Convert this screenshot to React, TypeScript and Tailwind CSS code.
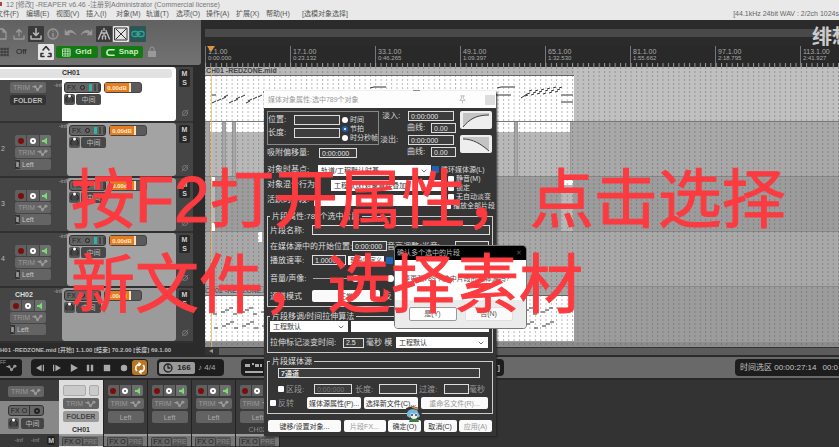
import React from "react";

const icon = {
  fill: "none",
  stroke: "currentColor",
  strokeLinecap: "round" as const,
  strokeLinejoin: "round" as const,
};

function EnvelopeIcon() {
  return (
    <svg viewBox="0 0 12 8" className="h-2 w-[11px] shrink-0" {...icon} strokeWidth="1.4">
      <path d="M1 2.5h2.500L6 6l3.500-4H11" />
      <circle cx="3.500" cy="2.500" r=".7" fill="currentColor" />
      <circle cx="6" cy="6" r=".9" fill="currentColor" />
      <circle cx="9.500" cy="2" r=".9" fill="currentColor" />
    </svg>
  );
}

function TrimButton() {
  return (
    <button className="flex h-[11px] w-9 shrink-0 items-center justify-center gap-[2px] rounded-[2px] bg-[#646464] text-[7px] leading-none text-[#9a9a9a]">
      TRIM
      <EnvelopeIcon />
    </button>
  );
}

function RecordButtons() {
  return (
    <div className="flex h-[11px] w-9 shrink-0 items-center gap-px">
      <button aria-label="录音" className="flex h-full flex-1 items-center justify-center rounded-l-[2px] bg-[#606060]">
        <span className="size-[6px] rounded-full bg-[#7c0d0d]" />
      </button>
      <button aria-label="输入" className="flex h-full flex-1 items-center justify-center bg-[#606060]">
        <span className="size-[6px] rounded-full border-2 border-white bg-[#555]" />
      </button>
      <button aria-label="监听" className="flex h-full flex-1 items-center justify-center rounded-r-[2px] bg-[#6e6e6e]">
        <svg viewBox="0 0 8 8" className="size-2" fill="#77e070">
          <path d="M1 3h2l3-2.500v7L3 5H1z" />
        </svg>
      </button>
    </div>
  );
}

function Knob() {
  return (
    <button aria-label="声像" className="flex size-[11px] shrink-0 items-center justify-center rounded-[2px] bg-[#555]">
      <svg viewBox="0 0 11 11" className="size-[11px]">
        <path d="M3 8.500a3.800 3.800 0 1 1 5 0" fill="#444" stroke="#222" />
        <circle cx="5.500" cy="2" r="1.500" fill="#fff" />
      </svg>
    </button>
  );
}

function MuteSolo() {
  return (
    <div className="flex w-[17px] shrink-0 flex-col items-center justify-between bg-[#454545] pb-1 pt-[2px] text-[#888]">
      <div className="flex w-[11px] flex-col rounded-[2px] bg-[#282828] text-[7px] font-bold leading-[9px] text-[#cfcfcf]">
        <button aria-label="静音">M</button>
        <button aria-label="独奏">S</button>
      </div>
      <svg viewBox="0 0 8 8" className="size-2" {...icon} strokeWidth=".7">
        <circle cx="4" cy="4" r="2.500" />
        <path d="M1 7l6-6" />
      </svg>
    </div>
  );
}

function TrackControls() {
  return (
    <div className="flex flex-col gap-px pl-[2px] pt-[2px]">
      <div className="flex gap-[3px]">
        <div className="flex h-[11px] w-[37px] items-center gap-[2px] rounded-[3px] border border-[#333] bg-[#646464] pl-[2px] text-[7px] leading-none text-[#252525]">
          <button>FX</button>
          <button aria-label="启用效果" className="ml-[2px] size-[5px] rounded-full border border-[#252525]" />
          <span className="ml-[2px] h-[7px] w-1 bg-[#2fb3a5]" />
          <span className="h-[7px] w-[2px] bg-[#444]" />
          <span className="h-[7px] w-[2px] bg-[#444]" />
        </div>
        <div className="flex h-[11px] w-[38px] items-center rounded-[3px] border border-[#444] bg-[#5a5a5a]">
          <button className="h-full w-[26px] border-r-2 border-[#ffe0b8] bg-[#e57d20] text-[6px] font-bold leading-none text-[#ffe9d2]">
            0.00dB
          </button>
        </div>
      </div>
      <div className="flex gap-px">
        <Knob />
        <button className="h-[11px] w-[25px] rounded-[2px] bg-[#484848] text-[7px] leading-none text-[#bbb]">中间</button>
      </div>
    </div>
  );
}

function FolderTrack() {
  return (
    <section className="flex h-14 border-b-2 border-[#333] bg-[#454545]">
      <div className="flex flex-1 flex-col rounded-r-[3px] bg-white">
        <div className="my-[2px] mr-1 flex h-[9px] items-center rounded-r-[3px] bg-[#e2e2e2] pl-[62px] text-[7px] font-bold text-[#333]">
          CH01
        </div>
        <div className="flex flex-1">
          <div className="flex w-[62px] flex-col gap-[2px] bg-[#484848] pl-[10px] pt-[2px]">
            <div className="flex">
              <TrimButton />
              <span className="ml-auto text-[6px] leading-none text-[#aaa]">-inf</span>
            </div>
            <button className="h-[10px] w-9 rounded-[2px] bg-[#333] text-[7px] font-bold leading-none text-[#bbb]">FOLDER</button>
          </div>
          <TrackControls />
        </div>
      </div>
      <MuteSolo />
    </section>
  );
}

function LeftInput() {
  return (
    <button className="flex h-[11px] w-9 items-center gap-[2px] rounded-[2px] bg-[#646464] text-[7px] leading-none text-[#c6c6c6]">
      <svg viewBox="0 0 5 9" className="h-[9px] w-[5px] bg-[#333]" {...icon} strokeWidth=".7">
        <path d="M1 2l3 1-3 1 3 1-3 1 3 1" />
      </svg>
      Left
    </button>
  );
}

function ChildTrack({ number }: { number: string }) {
  return (
    <section className="flex h-[55px] border-b-2 border-[#303030] bg-[#454545]">
      <div className="flex w-[15px] flex-col items-start justify-center pl-px text-[7px] text-[#bbb]">{number}</div>
      <div className="flex w-9 flex-col gap-px pt-3">
        <RecordButtons />
        <TrimButton />
        <LeftInput />
      </div>
      <span className="w-4 text-right text-[6px] leading-[7px] text-[#aaa]">-inf</span>
      <div className={`flex-1 rounded-[3px] ${number === "3" ? "bg-[#9b9b9b]" : "bg-[#a3a3a3]"}`}>
        <TrackControls />
      </div>
      <MuteSolo />
    </section>
  );
}

function SecondFolderTrack() {
  return (
    <section className="flex h-[55px] border-b-2 border-[#303030] bg-[#454545]">
      <div className="flex w-[46px] flex-col gap-px pl-[10px]">
        <span className="h-[11px] pl-[5px] pt-[2px] text-[7px] font-bold leading-[9px] text-[#ddd]">CH02</span>
        <RecordButtons />
        <TrimButton />
        <LeftInput />
      </div>
      <span className="w-4 text-right text-[6px] leading-[7px] text-[#aaa]">-inf</span>
      <div className="flex-1 rounded-[3px] bg-[#9b9b9b]">
        <TrackControls />
      </div>
      <MuteSolo />
    </section>
  );
}

function ToolButton({ label, tone = "plain", children }: { label: string; tone?: "plain" | "dark" | "light" | "teal"; children: React.ReactNode }) {
  const tones = {
    plain: "text-[#999]",
    dark: "bg-[#3a3a3a] text-[#bbb]",
    light: "bg-[#e4e4e4] text-[#333]",
    teal: "bg-[#2c5553] text-[#2aa79b]",
  };
  return (
    <button aria-label={label} className={`flex h-4 w-4 shrink-0 items-center justify-center rounded-[1px] ${tones[tone]}`}>
      <svg viewBox="0 0 14 14" className="size-[14px]" {...icon} strokeWidth="1.3">
        {children}
      </svg>
    </button>
  );
}

function Toolbar() {
  return (
    <div className="flex h-[45px] flex-col gap-[2px] rounded-br-[3px] bg-linear-to-b from-[#616161] to-[#727272] pt-[6px]">
      <div className="-ml-[6px] flex gap-px">
        <ToolButton label="新建工程"><path d="M3 2h5l3 3v7H3zM8 2v3h3" /></ToolButton>
        <ToolButton label="打开工程"><path d="M2 9v3h10V9M7 9V3M4.500 5L7 2.500 9.500 5" /></ToolButton>
        <ToolButton label="保存工程" tone="dark"><path d="M2 9v3h10V9M7 1.500v6.500M4.500 6L7 8.500 9.500 6" strokeWidth="1.500" /></ToolButton>
        <ToolButton label="工程设置"><circle cx="7" cy="7" r="5" /><path d="M7 6.500v3.500M7 4v.2" /></ToolButton>
        <ToolButton label="撤销"><path d="M2 3v5h5L5.500 6.500C8 4.500 11 5.500 13 8c-2-5-7-6-9.500-3z" fill="currentColor" strokeWidth=".5" /></ToolButton>
        <ToolButton label="重做"><path d="M12 3v5H7l1.500-1.500C6 4.500 3 5.500 1 8c2-5 7-6 9.500-3z" fill="currentColor" strokeWidth=".5" /></ToolButton>
        <ToolButton label="节拍器" tone="dark"><path d="M5 3.500L1.500 12M9 3.500l3.500 8.500M7 1.500v2M4.500 6h5M7 6v3M5.500 9v3M8.500 9v3" strokeWidth="1.400" /></ToolButton>
        <ToolButton label="自动交叉淡变" tone="light"><path d="M1 1h12v12H1zM2 2l10 10M12 2L2 12" strokeWidth="1" /></ToolButton>
        <ToolButton label="编组" tone="teal"><rect x="1" y="4.500" width="6" height="5" rx="2" /><rect x="7" y="4.500" width="6" height="5" rx="2" /><path d="M5 7h4" /></ToolButton>
      </div>
      <div className="flex items-center">
        <svg viewBox="0 0 10 10" className="size-[10px] text-[#333]" {...icon} strokeWidth="1"><path d="M0 2h8M0 5h8M0 8h8M2 1v8M5 1v8M8 1v8" strokeDasharray="2 1" /></svg>
        <span className="ml-[6px] w-[22px] text-[8px] leading-none text-[#222]">Off</span>
        <ToolButton label="波纹编辑" tone="light"><path d="M4 5l3-3.500L10 5M4 8.500H2v3h3M10 8.500h2v3H9" strokeWidth="1.600" /></ToolButton>
        <button className="ml-[2px] flex h-3 w-[42px] items-center justify-center gap-1 rounded-[2px] bg-[#137911] text-[8px] font-bold leading-none text-[#c6edc4]">
          <svg viewBox="0 0 10 10" className="size-[9px]" {...icon} strokeWidth=".9"><path d="M1 1h8v8H1zM3.500 1v8M6.500 1v8M1 3.500h8M1 6.500h8" /></svg>
          Grid
        </button>
        <button className="ml-[3px] flex h-3 w-[42px] items-center justify-center gap-1 rounded-[2px] bg-[#137911] text-[8px] font-bold leading-none text-[#c6edc4]">
          <svg viewBox="0 0 10 10" className="size-[9px]" {...icon} strokeWidth="1.800"><path d="M9 2H4a3 3 0 0 0 0 6h5" /></svg>
          Snap
        </button>
        <button aria-label="锁定" className="ml-1 text-[#999]">
          <svg viewBox="0 0 10 12" className="h-3 w-[10px]" fill="currentColor"><path d="M1 5h8v6H1z" /><path d="M3 5V3a2 2 0 0 1 4 0v2" fill="none" stroke="currentColor" /></svg>
        </button>
      </div>
    </div>
  );
}

const rulerMarks = [
  ["1.1.00", "0:00.000"],
  ["17.1.00", "0:23.132"],
  ["33.1.00", "0:46.265"],
  ["49.1.00", "1:09.397"],
  ["65.1.00", "1:32.530"],
  ["81.1.00", "1:55.662"],
  ["97.1.00", "2:18.795"],
  ["113.1.00", "2:41.927"],
];

function Ruler() {
  return (
    <div className="relative flex h-[21px] overflow-hidden bg-[#292929]">
      {rulerMarks.map(([bar, time]) => (
        <div key={bar} className="flex w-[85px] shrink-0 flex-col border-l border-[#777] pl-[2px] pt-[2px] text-[7px] leading-[7px] text-[#aaa]">
          <span>{bar}</span>
          <span className="text-[6px]">{time}</span>
        </div>
      ))}
      <svg className="absolute inset-0 h-full w-full">
        <defs>
          <pattern id="ticks" width="5.320" height="21" patternUnits="userSpaceOnUse">
            <path d="M.5 17v4" stroke="#999" />
          </pattern>
        </defs>
        <rect width="100%" height="100%" fill="url(#ticks)" />
        <path d="M2 0h8l-4 6z" fill="#dc9440" />
      </svg>
    </div>
  );
}

const melody = Array.from({ length: 12 }, (_, i) => {
  const x = 7 + i * 4 + (i % 3);
  const y = 27 - (i % 4) * 2;
  return `M${x} ${y}l4 -2`;
}).join("");
const climb = Array.from({ length: 18 }, (_, i) => `M${320 + i * 2} ${20 - Math.round(i / 4) - (i % 3) * 2}l3 -1`).join("");
const pulses = Array.from({ length: 68 }, (_, i) => {
  const x = 8 + i * 5 + ((i * 7) % 4);
  const y = 18 - ((i * 5) % 4) * 2;
  return `M${x} ${y}h4M${x + 1} ${y + 14}h4`;
}).join("");

function Arrangement() {
  return (
    <div className="relative flex h-[280px] flex-col overflow-hidden bg-[#8c8c8c]">
      <div className="h-[54px] bg-[#c0c0c0]">
        <div className="flex h-full w-[369px] flex-col">
          <span className="h-[9px] border-b border-[#666] bg-[#b9b9b9] pl-px text-[7px] font-bold leading-[8px] text-[#444]">CH01 -REDZONE.mid</span>
          <svg className="min-h-0 w-full flex-1 bg-white" fill="none" stroke="#333">
            <path d={melody} />
            <path d="M6 19h5M58 16h9M165 12l4-1h12M208 15h7M292 12l4-1h14M290 19h16M316 22l6-4M356 19h12M356 26h12" />
            <path d={climb} />
          </svg>
        </div>
      </div>
      <div className="h-[55px] border-t border-[#777] bg-[#a8a8a8]">
        <div className="flex h-full w-[369px] gap-[2px] pl-1">
          {["w-[14px]", "w-2", "w-[280px]", "w-[54px]"].map((w, i) => (
            <div key={i} className={`${w} shrink-0 border-x border-[#999] bg-[#b8b8b8]`}>
              <div className="h-[10px] bg-white" />
            </div>
          ))}
        </div>
      </div>
      <div className="flex h-[55px] border-t border-[#888] bg-[#9c9c9c]">
        <span className="ml-[6px] h-[54px] w-1 border-y-8 border-white bg-[#b8b8b8]" />
        <span className="ml-[346px] h-[54px] w-3 border-t-8 border-white bg-[#b8b8b8]" />
      </div>
      <div className="h-[55px] border-t border-[#888] bg-[#a8a8a8]">
        <div className="ml-[53px] h-[10px] w-1 bg-white" />
      </div>
      <div className="h-[56px] border-t border-[#888] bg-[#9c9c9c]">
        <div className="flex h-[54px] w-[369px] flex-col">
          <span className="h-[9px] border-b border-[#666] bg-[#a5a5a5] text-[7px] leading-[8px] text-[#444]">CH02 -REDZONE.mid</span>
          <svg className="min-h-0 w-full flex-1 bg-white" fill="none" stroke="#333">
            <path d={pulses} />
          </svg>
        </div>
      </div>
      <svg className="pointer-events-none absolute inset-0 h-full w-full">
        <defs>
          <pattern id="grid" width="5.320" height="4" patternUnits="userSpaceOnUse">
            <path d="M.5 0v2" stroke="#555" strokeOpacity=".42" />
          </pattern>
        </defs>
        <rect width="100%" height="100%" fill="url(#grid)" />
        <path d="M6.500 0v280" stroke="#eeb463" strokeOpacity=".75" />
      </svg>
    </div>
  );
}

function PlayIcon({ label, children }: { label: string; children: React.ReactNode }) {
  return (
    <button aria-label={label} className="flex h-full flex-1 items-center justify-center text-[#aaa]">
      <svg viewBox="0 0 10 10" className="size-2" fill="currentColor">{children}</svg>
    </button>
  );
}

function Transport() {
  return (
    <div className="flex h-[23px] items-center border-b-2 border-[#282828] bg-[#696969]">
      <button className="flex h-[17px] w-[22px] items-center overflow-hidden rounded-r-[3px] bg-[#1d1d1d] text-[5px] leading-none text-[#999]">
        <span className="self-start pt-px">FF</span>
        <EnvelopeIcon />
      </button>
      <div className="ml-[9px] flex h-[17px] w-[117px] items-center rounded-[4px] bg-[#1d1d1d] px-px">
        <PlayIcon label="转到开头"><path d="M7 1v8L0 5zM8.500 1H10v8H8.500z" /></PlayIcon>
        <PlayIcon label="转到结尾"><path d="M3 1v8l7-4zM0 1h1.500v8H0z" /></PlayIcon>
        <PlayIcon label="播放"><path d="M1 0v10l9-5z" /></PlayIcon>
        <PlayIcon label="暂停"><path d="M1 1h3v8H1zM6 1h3v8H6z" /></PlayIcon>
        <PlayIcon label="停止"><path d="M1 1h8v8H1z" /></PlayIcon>
        <PlayIcon label="录制"><circle cx="5" cy="5" r="4" /></PlayIcon>
        <button aria-label="循环" className="flex h-[15px] w-[15px] shrink-0 items-center justify-center rounded-[3px] bg-[#b97522] text-white">
          <svg viewBox="0 0 12 12" className="size-3" {...icon} strokeWidth="1.600"><path d="M2.500 8.500A4 4 0 0 1 5 2.200h1M9.500 3.500A4 4 0 0 1 7 9.800H6M5 1l1.500 1.200L5 3.500M7 8.500L5.500 9.800 7 11" /></svg>
        </button>
      </div>
      <div className="ml-[9px] flex h-[17px] w-[67px] items-center gap-[3px] rounded-[4px] bg-[#1d1d1d] px-[2px] text-[8px] text-[#aaa]">
        <button className="flex h-3 w-9 items-center justify-center gap-1 rounded-[2px] bg-[#999] text-[8px] font-bold leading-none text-[#222]">
          <svg viewBox="0 0 10 10" className="size-[10px]" {...icon} strokeWidth="1.300"><circle cx="5" cy="5" r="4" /><path d="M5 2.500V5h2" /></svg>
          166
        </button>
        <span className="whitespace-nowrap">♪ 4/4</span>
      </div>
      <div className="ml-[17px] flex h-[17px] w-[263px] items-center justify-between rounded-[4px] bg-[#1d1d1d] px-1 text-[8px] font-bold text-[#bbb]">
        <svg viewBox="0 0 18 12" className="h-3 w-[18px]" fill="#aaa">
          <path d="M0 2h5v3H0zM7 1h2v2H7zM10 2h4v3h-4zM15 2h2v3h-2zM0 9h18v2H0z" />
        </svg>
        <span>]</span>
      </div>
      <div className="ml-auto flex h-[17px] w-[104px] items-center gap-[6px] overflow-hidden whitespace-nowrap rounded-l-[4px] bg-[#1d1d1d] pl-[5px] text-[8px] text-[#c4c4c4]">
        <span>时间选区 00:00:27:14</span>
        <span>00:0</span>
      </div>
    </div>
  );
}

function FxPre() {
  return (
    <div className="flex h-3 border-t-2 border-[#9a9a9a] bg-[#777] px-[3px] pt-px text-[7px] leading-[8px] text-[#252525]">
      <button className="w-[21px] rounded-t-[2px] border border-b-0 border-[#444] bg-[#666]">FX O</button>
      <button className="w-[15px] rounded-t-[2px] bg-[#555] text-[#888]">PRE</button>
    </div>
  );
}

function MixerStrip({ name }: { name: string }) {
  return (
    <section className="flex w-11 shrink-0 flex-col border-r border-[#222] bg-[#3b3b3b]">
      <div className="flex h-[54px] flex-col items-center gap-[2px] pt-[5px]">
        <RecordButtons />
        <TrimButton />
        <button className="h-3 w-9 rounded-[2px] bg-[#626262] text-[7px] leading-none text-[#aaa]">Left</button>
        <span className="text-[7px] leading-[9px] text-[#888]">{name}</span>
      </div>
      <FxPre />
    </section>
  );
}

function Mixer() {
  return (
    <div className="flex min-h-[66px] flex-1 overflow-hidden bg-[#333]">
      <section className="flex w-[59px] shrink-0 flex-col bg-[#3b3b3b]">
        <div className="h-[21px] pl-2 pt-[6px]"><TrimButton /></div>
        <div className="flex h-[33px] flex-col gap-[2px] bg-[#888] pl-2 pt-1">
          <div className="flex h-[11px] w-9 rounded-[3px] border border-[#333] bg-[#666] text-[7px] leading-[9px] text-[#222]">
            <button className="w-[21px] border-r border-[#333]">FX O</button>
            <button aria-label="启用效果" className="flex flex-1 items-center justify-center"><span className="size-[6px] rounded-full border-2 border-[#222]" /></button>
          </div>
          <div className="flex gap-[2px]">
            <Knob />
            <button className="h-[11px] w-[23px] rounded-[2px] bg-[#444] text-[7px] leading-none text-[#bbb]">中间</button>
          </div>
        </div>
        <div className="flex flex-1 items-center justify-end gap-2 bg-[#383838] pr-1 text-[6px] text-[#999]">
          <span>-inf</span><span>-inf</span><button className="rounded-[2px] bg-[#222] px-px text-[7px] font-bold leading-[9px] text-[#ccc]">M</button>
        </div>
      </section>
      <section className="flex w-[45px] shrink-0 flex-col border-r border-[#222] bg-[#dedede]">
        <div className="flex h-[54px] flex-col items-center gap-[2px] pt-[5px]">
          <div className="flex h-[11px] w-9 gap-[3px]">
            <span className="w-[23px] rounded-[2px] border border-[#aaa] bg-[#cacaca]" />
            <span className="flex-1 rounded-[2px] border border-[#aaa] bg-[#cacaca]" />
          </div>
          <TrimButton />
          <button className="h-[11px] w-9 rounded-[2px] bg-[#999] text-[7px] font-bold leading-none text-[#444]">FOLDER</button>
          <span className="pt-px text-[7px] font-bold leading-[9px] text-[#333]">CH01</span>
        </div>
        <FxPre />
      </section>
      <MixerStrip name="" />
      <MixerStrip name="" />
      <MixerStrip name="" />
      <MixerStrip name="CH02" />
    </div>
  );
}

function Field({ label, value = "", className }: { label: string; value?: string; className: string }) {
  return (
    <input
      aria-label={label}
      defaultValue={value}
      className={`h-[10px] min-w-0 shrink-0 border border-[#ddd] bg-[#3d3d3d] px-[2px] text-[7px] leading-none text-[#e4e4e4] ${className}`}
    />
  );
}

function Dropdown({ label, value, className }: { label: string; value: string; className: string }) {
  return (
    <span className={`relative flex h-[11px] shrink-0 ${className}`}>
      <select aria-label={label} className="h-full w-full appearance-none bg-white px-[3px] text-[7px] leading-none text-[#333]">
        <option>{value}</option>
      </select>
      <svg viewBox="0 0 6 4" className="pointer-events-none absolute right-1 top-1 h-1 w-[6px]" {...icon} stroke="#777"><path d="M1 1l2 2 2-2" /></svg>
    </span>
  );
}

function Check({ label, checked = false, className = "" }: { label: string; checked?: boolean; className?: string }) {
  return (
    <label className={`flex h-[9px] items-center gap-[2px] whitespace-nowrap ${className}`}>
      <input
        type="checkbox"
        defaultChecked={checked}
        className="size-[6px] shrink-0 appearance-none rounded-[1px] bg-white checked:size-[7px] checked:bg-[#1d62b4]"
      />
      {label}
    </label>
  );
}

function Radio({ label, checked = false }: { label: string; checked?: boolean }) {
  return (
    <label className="flex h-[9px] items-center gap-[2px] whitespace-nowrap">
      <input
        type="radio"
        name="time-unit"
        defaultChecked={checked}
        className="size-[6px] shrink-0 appearance-none rounded-full bg-white checked:border-2 checked:border-[#1d62b4]"
      />
      {label}
    </label>
  );
}

function CurveButton({ label, curve, area }: { label: string; curve: string; area: string }) {
  return (
    <button aria-label={label} className="h-[18px] w-8 rounded-[2px] bg-[#eee] p-px">
      <svg viewBox="0 0 30 16" className="h-4 w-[30px]">
        <path d={area} fill="#c4c4c4" />
        <path d={curve} fill="none" stroke="#444" />
      </svg>
    </button>
  );
}

function PushButton({ children, className, dim = false }: { children: string; className: string; dim?: boolean }) {
  return (
    <button className={`h-3 shrink-0 overflow-hidden whitespace-nowrap rounded-[2px] bg-[#fafafa] text-[7px] leading-none ${dim ? "text-[#999]" : "text-[#333]"} ${className}`}>
      {children}
    </button>
  );
}

function PropertiesDialog() {
  return (
    <section className="absolute left-[264px] top-[91px] flex w-[232px] flex-col bg-[#353535] pb-1 text-[8px] leading-[9px] text-[#ddd] shadow-[1px_1px_2px_#222]">
      <header className="flex h-[17px] items-center bg-[#fdfdfd] pl-1 text-[7px] text-[#999]">
        媒体对象属性:选中789个对象
        <svg viewBox="0 0 10 10" className="ml-auto mr-[18px] size-[9px]" {...icon} stroke="#bbb"><path d="M3 1h4M4 1v3L2 6h6L6 4V1M5 6v3" /></svg>
        <button aria-label="关闭" className="mr-px size-[10px] bg-[#ddd]" />
      </header>
      <div className="flex h-[53px] pl-[3px] pt-[3px]">
        <div className="flex w-[113px] flex-col">
          <div className="flex h-[34px] w-[112px] border border-[#888]">
            <div className="flex w-[73px] flex-col gap-[3px] pt-[3px]">
              <label className="flex justify-between">位置:<Field label="位置" className="w-[46px]" /></label>
              <label className="flex justify-between">长度:<Field label="长度" className="w-[46px]" /></label>
            </div>
            <div className="flex flex-col pl-[2px] pt-[3px] text-[7px]">
              <Radio label="时间" />
              <Radio label="节拍" checked />
              <Radio label="时分秒帧" />
            </div>
          </div>
          <label className="mt-[3px] flex whitespace-nowrap"><span className="w-[52px]">吸附偏移量:</span><Field label="吸附偏移量" value="0:00:000" className="w-[38px]" /></label>
        </div>
        <div className="flex w-[76px] flex-col gap-[2px]">
          <label className="flex justify-between pl-[2px]">淡入:<Field label="淡入" value="0:00:000" className="mr-[2px] w-[46px]" /></label>
          <label className="flex justify-between pl-[27px]">曲线:<Field label="淡入曲线" value="0.00" className="w-[25px]" /></label>
          <label className="flex justify-between">淡出:<Field label="淡出" value="0:00:000" className="mr-[2px] w-[46px]" /></label>
          <label className="flex justify-between pl-[27px]">曲线:<Field label="淡出曲线" value="0.00" className="w-[25px]" /></label>
        </div>
        <div className="ml-1 flex flex-col gap-[6px]">
          <CurveButton label="淡入曲线形状" curve="M2 15C8 8 14 3 28 3" area="M2 15C8 8 14 3 28 3V1H2z" />
          <CurveButton label="淡出曲线形状" curve="M2 3C12 3 20 8 28 15" area="M2 3C12 3 20 8 28 15V1H2z" />
        </div>
      </div>
      <div className="flex h-[51px] overflow-hidden pl-[3px] pt-1">
        <div className="flex w-[165px] shrink-0 flex-col gap-1 whitespace-nowrap">
          <div className="flex"><span className="w-[51px] shrink-0">对象时基点:</span><Dropdown label="对象时基" value="轨道/工程默认时基" className="w-[113px]" /></div>
          <div className="flex"><span className="w-16 shrink-0">对象混合行为:</span><Dropdown label="对象混合行为" value="工程默认(对象直接叠加)" className="w-[114px]" /></div>
          <div className="flex"><span className="w-[47px] shrink-0">活跃的片段:</span><Dropdown label="活跃的片段" value="" className="w-[131px]" /></div>
        </div>
        <div className="relative flex flex-col text-[7px]">
          <Check label="循环媒体源(L)" checked />
          <Check label="静音(M)" className="pl-4" />
          <Check label="锁定" className="pl-4" />
          <Check label="无自动淡变" className="pl-4" />
          <Check label="播放全部片段" className="pl-[13px]" />
        </div>
      </div>
      <fieldset className="mx-[3px] h-[95px] border border-[#ccc] px-[2px]">
        <legend className="h-[9px] px-[2px]">片段属性:789个选中片段</legend>
        <div className="flex flex-col">
          <label className="flex h-[18px] items-center justify-between">片段名称:<Field label="片段名称" className="w-[178px]" /></label>
          <div className="flex h-[14px] items-center whitespace-nowrap">
            <span className="w-[82px] shrink-0">在媒体源中的开始位置:</span>
            <Field label="开始位置" value="0:00:000" className="w-[35px]" />
            <span className="w-[68px] shrink-0">音高调整(半音):</span>
            <Field label="音高" className="w-[34px]" />
          </div>
          <div className="flex h-[14px] items-center gap-[2px]">
            <label className="flex items-center"><span className="w-[42px]">播放速率:</span><Field label="播放速率" value="1.00000" className="w-[34px]" /></label>
            <button className="h-[9px] w-9 overflow-hidden whitespace-nowrap bg-white text-[6px] leading-none text-[#333]">预设/自定义</button>
            <Check label="" checked />
          </div>
          <div className="flex h-[22px] items-center gap-[3px]">
            <span className="w-10">音量/声像:</span>
            <input aria-label="音量" type="range" defaultValue="90" className="h-px w-[50px] appearance-none bg-[#aaa] [&::-webkit-slider-thumb]:size-[7px] [&::-webkit-slider-thumb]:appearance-none [&::-webkit-slider-thumb]:rounded-full [&::-webkit-slider-thumb]:bg-white" />
            <input aria-label="声像" type="range" defaultValue="90" className="h-px w-[30px] appearance-none bg-[#aaa] [&::-webkit-slider-thumb]:size-[7px] [&::-webkit-slider-thumb]:appearance-none [&::-webkit-slider-thumb]:rounded-full [&::-webkit-slider-thumb]:bg-white" />
          </div>
          <div className="flex h-[14px] items-center gap-1"><span className="w-[38px]">通道模式</span><PushButton className="w-[68px]">正常</PushButton><span>反</span></div>
        </div>
      </fieldset>
      <fieldset className="mx-[3px] mt-[5px] h-[41px] border border-[#ccc] px-[2px]">
        <legend className="h-[9px] px-[2px]">片段移调/时间拉伸算法</legend>
        <div className="flex gap-[3px]">
          <Dropdown label="算法" value="工程默认" className="w-[78px]" />
          <Dropdown label="算法参数" value="" className="w-[138px]" />
        </div>
        <div className="mt-[5px] flex items-center whitespace-nowrap">
          <span className="w-[73px]">拉伸标记淡变时间:</span>
          <Field label="淡变时间" value="2.5" className="w-[21px]" />
          <span className="w-8 pl-[2px]">毫秒 模</span>
          <Dropdown label="模式" value="工程默认" className="w-[92px]" />
        </div>
      </fieldset>
      <fieldset className="mx-[3px] mt-1 h-[57px] border border-[#ccc] px-[2px]">
        <legend className="h-[9px] px-[2px]">片段媒体源</legend>
        <div className="pl-2 pt-[2px]"><Field label="媒体源" value="7通道" className="w-[202px] font-bold" /></div>
        <div className="mt-[6px] flex items-center pl-2 text-[#999]">
          <Check label="区段:" className="w-9" />
          <input aria-label="区段开始" defaultValue="0:00:000" className="h-[10px] w-[38px] border border-[#ddd] bg-[#3d3d3d] px-[2px] text-[7px] leading-none text-[#777]" />
          <span className="w-[27px] pl-[3px]">长度:</span>
          <Field label="区段长度" className="w-[38px]" />
          <span className="w-[27px] pl-[2px]">过渡:</span>
          <Field label="过渡" className="w-[25px]" />
          <span>毫秒</span>
        </div>
        <div className="mt-[3px] flex items-center gap-[3px] text-[#999]">
          <Check label="反转" className="w-[34px]" />
          <PushButton className="w-[54px]">媒体源属性(P)...</PushButton>
          <PushButton className="w-[54px]">选择新文件(C)...</PushButton>
          <PushButton className="w-[67px]" dim>重命名文件(R)...</PushButton>
        </div>
      </fieldset>
      <footer className="mt-[6px] flex justify-between px-1">
        <PushButton className="w-[73px]">键移/设置对象...</PushButton>
        <PushButton className="w-[42px]" dim>片段FX...</PushButton>
        <PushButton className="w-[33px]">确定(O)</PushButton>
        <PushButton className="w-[33px]">取消(C)</PushButton>
        <PushButton className="w-[33px]" dim>应用(A)</PushButton>
      </footer>
    </section>
  );
}

function ConfirmDialog() {
  return (
    <section className="absolute left-[394px] top-[245px] w-[133px] overflow-hidden rounded-[4px] border border-[#777] bg-white text-[7px] text-[#555]">
      <header className="flex h-[14px] items-center justify-between bg-black pl-[2px] pr-1 text-[7px] text-[#bbb]">
        确认多个选中的片段
        <button aria-label="关闭对话框" className="text-[#555]">✕</button>
      </header>
      <p className="h-10 whitespace-nowrap pl-2 pt-[14px] leading-[10px]">要更改789个选中片段的媒体源吗?</p>
      <footer className="flex h-7 items-center justify-center gap-2 bg-[#ebebeb]">
        <button className="h-[14px] w-12 rounded-[2px] border border-[#999] bg-white">是(Y)</button>
        <button className="h-[14px] w-12 rounded-[2px] border border-[#e0e0e0] bg-[#fafafa]">否(N)</button>
      </footer>
    </section>
  );
}

function MascotCursor() {
  return (
    <svg viewBox="0 0 18 18" className="absolute left-[405px] top-[405px] size-[18px]">
      <path d="M1 3l7-2 8 3 1 6-4 2H5L2 8z" fill="#3a3535" />
      <path d="M7 2l6 2" stroke="#e58b3d" strokeWidth="1.500" />
      <circle cx="9" cy="10" r="4" fill="#f8e9df" />
      <path d="M2 11c-1-6 4-8 10-6l3 6-2 2-1-5-3 1-3-1-1 5z" fill="#6fb8e0" />
      <path d="M5 14h8l1 3H4z" fill="#2f8040" />
      <path d="M7 9v2M11 9v2" stroke="#263f66" strokeWidth="1.500" />
    </svg>
  );
}

const menus = ["文件(F)", "编辑(E)", "视图(V)", "插入(I)", "对象(M)", "轨道(T)", "选项(O)", "操作(A)", "扩展(X)", "帮助(H)"];

export default function App() {
  return (
    <main className="relative flex min-h-screen w-full flex-col overflow-hidden bg-[#2b2b2b] font-['Liberation_Sans','Noto_Sans_CJK_SC',sans-serif]">
      <header className="flex h-5 flex-col bg-[#e9e9e9]">
        <h1 className="flex h-2 items-center gap-1 whitespace-nowrap text-[7px] leading-none text-[#777]"><span className="h-1 w-[2px] bg-[#a44]" />12 [修改] -REAPER v6.46 -注册到Administrator (Commercial license)</h1>
        <nav className="flex h-3 items-center whitespace-nowrap text-[7px] text-[#555]">
          <div className="-ml-[4px] flex">
            {menus.map((m) => (
              <button key={m} className="w-[30px] text-left">{m}</button>
            ))}
          </div>
          <span className="ml-[6px]">[选模对象选择]</span>
          <span className="ml-auto text-[7px] text-[#666]">[44.1kHz 24bit WAV : 2/2ch 1024s</span>
        </nav>
      </header>
      <div className="flex">
        <aside className="flex w-[201px] shrink-0 flex-col bg-[#2b2b2b]">
          <Toolbar />
          <div className="mt-[2px] mr-2 flex flex-col">
            <FolderTrack />
            <ChildTrack number="2" />
            <ChildTrack number="3" />
            <ChildTrack number="4" />
            <SecondFolderTrack />
          </div>
          <p className="overflow-hidden whitespace-nowrap pt-px text-[6px] font-bold leading-[13px] text-[#bbb]">
            H01 -REDZONE.mid [开始] 1.1.00 [结束] 70.2.00 [长度] 69.1.00
          </p>
        </aside>
        <div className="ml-1 flex min-w-0 flex-1 flex-col">
          <div className="flex h-[26px] items-center">
            <div className="h-2 flex-1 bg-[#494949]" />
          </div>
          <Ruler />
          <Arrangement />
          <div className="flex h-2 items-center gap-[6px] bg-[#333] pl-1">
            <button aria-label="向左滚动" className="border-y-2 border-r-4 border-y-transparent border-r-[#999]" />
            <div className="h-[7px] flex-1 bg-[#5b5b5b]" />
          </div>
        </div>
      </div>
      <Transport />
      <Mixer />
      <span className="absolute left-[812px] top-[24px] whitespace-nowrap font-['Noto_Sans_CJK_SC',sans-serif] text-[20px] font-bold leading-6 text-[#ccc]">绯想</span>
      <PropertiesDialog />
      <ConfirmDialog />
      <MascotCursor />
      <p className="pointer-events-none absolute left-[71px] top-[158px] whitespace-nowrap text-[64px] leading-[85px] text-[#fb3b40] [-webkit-text-stroke:1px_#fb3b40]">
        按F2打开属性，点击选择
        <br />
        新文件，选择素材
      </p>
    </main>
  );
}
